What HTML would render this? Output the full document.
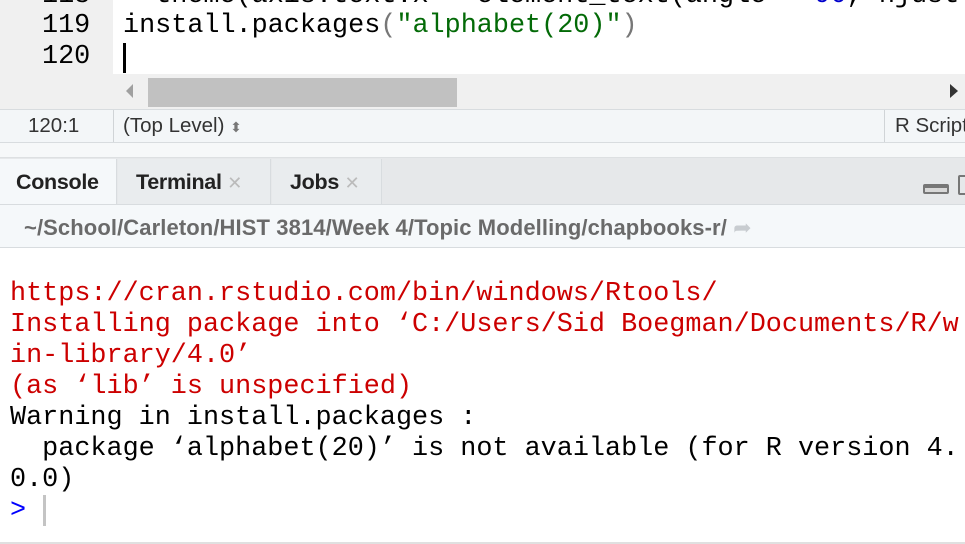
<!DOCTYPE html>
<html><head><style>
*{margin:0;padding:0;box-sizing:border-box}
body{width:965px;height:544px;overflow:hidden;background:#fff;position:relative;font-family:"Liberation Sans",sans-serif}
.mono{font-family:"Liberation Mono",monospace;font-size:26.8px;white-space:pre;position:absolute}
.abs{position:absolute}
</style></head><body>
<div class="abs" style="left:0;top:0;width:113px;height:74px;background:#f0f0f0"></div>
<div class="mono" style="left:42px;top:-19px;color:#000">118</div>
<div class="mono" style="left:123px;top:-19px;color:#000">  theme(axis.text.x = element_text(angle = <span style="color:#00c">90</span>, hjust</div>
<div class="mono" style="left:42px;top:11px">119</div>
<div class="mono" style="left:123px;top:11px">install.packages<span style="color:#777">(</span><span style="color:#036a07">"alphabet(20)"</span><span style="color:#777">)</span></div>
<div class="mono" style="left:42px;top:42px">120</div>
<div class="abs" style="left:123px;top:43px;width:3px;height:30px;background:#000"></div>
<div class="abs" style="left:0;top:74px;width:965px;height:35px;background:#f0f0f0"></div>
<div class="abs" style="left:148px;top:78px;width:309px;height:29px;background:#c1c1c1"></div>
<div class="abs" style="left:126px;top:84px;width:0;height:0;border-top:7px solid transparent;border-bottom:7px solid transparent;border-right:7px solid #a0a0a0"></div>
<div class="abs" style="left:950px;top:84px;width:0;height:0;border-top:7px solid transparent;border-bottom:7px solid transparent;border-left:8px solid #333"></div>
<div class="abs" style="left:0;top:109px;width:965px;height:34px;background:#f3f6f8;border-top:1px solid #d8dcdf;border-bottom:1px solid #d8dcdf"></div>
<div class="abs" style="left:113px;top:110px;width:1px;height:32px;background:#d0d4d7"></div>
<div class="abs" style="left:884px;top:110px;width:1px;height:32px;background:#d0d4d7"></div>
<div class="abs" style="left:28px;top:114px;font-size:20.5px;color:#333">120:1</div>
<div class="abs" style="left:123px;top:114px;font-size:20.5px;color:#333">(Top Level) <span style="font-size:14px;color:#777">⬍</span></div>
<div class="abs" style="left:895px;top:114px;font-size:20.5px;color:#333;white-space:nowrap">R Script</div>
<div class="abs" style="left:0;top:143px;width:965px;height:15px;background:#f6f8f9;border-bottom:1px solid #dde0e2"></div>
<div class="abs" style="left:0;top:158px;width:965px;height:46px;background:#e6e8ea"></div>
<div class="abs" style="left:0;top:159px;width:117px;height:46px;background:#f5f8fa;border-right:1px solid #d8dcdf"></div>
<div class="abs" style="left:118px;top:159px;width:153px;height:45px;background:#e9ecee;border-right:1px solid #d8dcdf"></div>
<div class="abs" style="left:272px;top:159px;width:110px;height:45px;background:#e9ecee;border-right:1px solid #d8dcdf"></div>
<div class="abs" style="left:16px;top:170px;font-size:21.5px;font-weight:bold;color:#222;letter-spacing:-0.3px">Console</div>
<div class="abs" style="left:136px;top:170px;font-size:21.5px;font-weight:bold;color:#222;letter-spacing:-0.3px">Terminal <span style="color:#bbb;font-weight:normal;font-size:18px">✕</span></div>
<div class="abs" style="left:290px;top:170px;font-size:21.5px;font-weight:bold;color:#222;letter-spacing:-0.3px">Jobs <span style="color:#bbb;font-weight:normal;font-size:18px">✕</span></div>
<div class="abs" style="left:923px;top:184px;width:26px;height:10px;border:2px solid #777;border-top:4px solid #777;border-radius:2px;background:#d8d8d8"></div>
<div class="abs" style="left:958px;top:175px;width:12px;height:20px;border:2px solid #777;border-radius:2px"></div>
<div class="abs" style="left:0;top:204px;width:965px;height:44px;background:#f5f8fa;border-top:1px solid #d8dcdf;border-bottom:1px solid #d8dcdf"></div>
<div class="abs" style="left:24px;top:215px;font-size:22px;font-weight:bold;color:#6a6a6a;letter-spacing:0.1px;white-space:nowrap">~/School/Carleton/HIST 3814/Week 4/Topic Modelling/chapbooks-r/ <span style="color:#c8ccd0;font-weight:normal">➦</span></div>
<div class="mono" style="left:10px;top:279px;color:#c00;line-height:31px">https://cran.rstudio.com/bin/windows/Rtools/
Installing package into ‘C:/Users/Sid Boegman/Documents/R/w
in-library/4.0’
(as ‘lib’ is unspecified)
<span style="color:#000">Warning in install.packages :
  package ‘alphabet(20)’ is not available (for R version 4.
0.0)</span>
<span style="color:#00f">&gt;</span></div>
<div class="abs" style="left:43px;top:495px;width:3px;height:31px;background:#c4c4c4"></div>
<div class="abs" style="left:0;top:542px;width:965px;height:2px;background:#e0e0e0"></div>
</body></html>
